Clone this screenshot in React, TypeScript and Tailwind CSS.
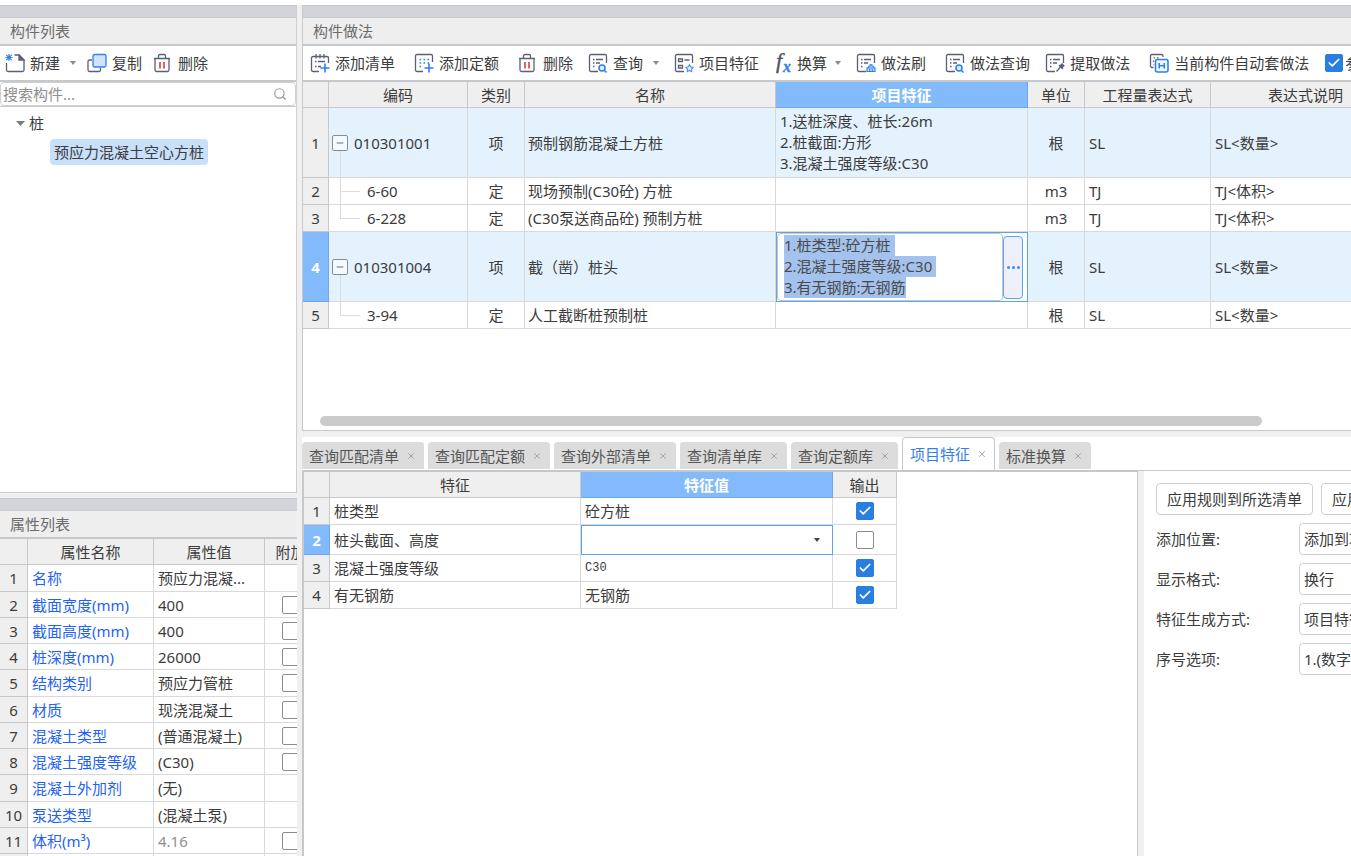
import React, { useEffect, useRef, useState } from "react";
import clsx from "clsx";
import { Check, Minus, Search, X } from "lucide-react";

type IconName =
  | "new"
  | "copy"
  | "trash"
  | "addList"
  | "addQuota"
  | "query"
  | "feature"
  | "fx"
  | "brush"
  | "extract"
  | "auto";

interface ToolItem {
  icon: IconName;
  label: string;
  menu?: boolean;
  wide?: boolean;
}

interface MethodRow {
  code: string;
  kind: string;
  name: string;
  features?: string[];
  unit: string;
  expr: string;
  note: string;
  child?: "mid" | "last";
  editing?: boolean;
}

interface PropertyRow {
  name: string;
  value: string;
  extra?: boolean;
  muted?: boolean;
}

interface FeatureRow {
  name: string;
  value: string;
  output: boolean;
}

const leftTools: ToolItem[] = [
  { icon: "new", label: "新建", menu: true },
  { icon: "copy", label: "复制" },
  { icon: "trash", label: "删除" },
];

const rightTools: ToolItem[] = [
  { icon: "addList", label: "添加清单" },
  { icon: "addQuota", label: "添加定额", wide: true },
  { icon: "trash", label: "删除", wide: true },
  { icon: "query", label: "查询", menu: true },
  { icon: "feature", label: "项目特征" },
  { icon: "fx", label: "换算", menu: true },
  { icon: "brush", label: "做法刷" },
  { icon: "query", label: "做法查询", wide: true },
  { icon: "extract", label: "提取做法" },
  { icon: "auto", label: "当前构件自动套做法", wide: true },
];

const methods: MethodRow[] = [
  {
    code: "010301001",
    kind: "项",
    name: "预制钢筋混凝土方桩",
    features: ["1.送桩深度、桩长:26m", "2.桩截面:方形", "3.混凝土强度等级:C30"],
    unit: "根",
    expr: "SL",
    note: "SL<数量>",
  },
  { code: "6-60", kind: "定", name: "现场预制(C30砼) 方桩", unit: "m3", expr: "TJ", note: "TJ<体积>", child: "mid" },
  { code: "6-228", kind: "定", name: "(C30泵送商品砼) 预制方桩", unit: "m3", expr: "TJ", note: "TJ<体积>", child: "last" },
  {
    code: "010301004",
    kind: "项",
    name: "截（凿）桩头",
    features: ["1.桩类型:砼方桩", "2.混凝土强度等级:C30", "3.有无钢筋:无钢筋"],
    unit: "根",
    expr: "SL",
    note: "SL<数量>",
    editing: true,
  },
  { code: "3-94", kind: "定", name: "人工截断桩预制桩", unit: "根", expr: "SL", note: "SL<数量>", child: "last" },
];

const properties: PropertyRow[] = [
  { name: "名称", value: "预应力混凝..." },
  { name: "截面宽度(mm)", value: "400", extra: true },
  { name: "截面高度(mm)", value: "400", extra: true },
  { name: "桩深度(mm)", value: "26000", extra: true },
  { name: "结构类别", value: "预应力管桩", extra: true },
  { name: "材质", value: "现浇混凝土", extra: true },
  { name: "混凝土类型", value: "(普通混凝土)", extra: true },
  { name: "混凝土强度等级", value: "(C30)", extra: true },
  { name: "混凝土外加剂", value: "(无)" },
  { name: "泵送类型", value: "(混凝土泵)" },
  { name: "体积(m³)", value: "4.16", extra: true, muted: true },
];

const initialFeatures: FeatureRow[] = [
  { name: "桩类型", value: "砼方桩", output: true },
  { name: "桩头截面、高度", value: "", output: false },
  { name: "混凝土强度等级", value: "C30", output: true },
  { name: "有无钢筋", value: "无钢筋", output: true },
];

const tabs = ["查询匹配清单", "查询匹配定额", "查询外部清单", "查询清单库", "查询定额库", "项目特征", "标准换算"];

const options = [
  { id: "position", label: "添加位置:", value: "添加到项" },
  { id: "format", label: "显示格式:", value: "换行" },
  { id: "mode", label: "特征生成方式:", value: "项目特征" },
  { id: "order", label: "序号选项:", value: "1.(数字)" },
];

// shared page outline used by most of the toolbar icons
const sheet = <path d="M9 17.500H2A1.500 1.500 0 0 1 .5 16V2A1.500 1.500 0 0 1 2 .5h14A1.500 1.500 0 0 1 17.500 2v7" />;
const sheetLines = <path d="M4 5.500h1.500M7 5.500h7M4 9h1.500M7 9h4M4 12.500h1.500" />;

const icons: Record<IconName, React.ReactNode> = {
  new: (
    <>
      <path d="M.5 9v7A1.500 1.500 0 0 0 2 17.500h14.500A1.500 1.500 0 0 0 18 16V6l-5-5H8.500" />
      <path d="M13 1v5h5z" fill="#5b6175" />
      <path stroke="#2f80ed" strokeWidth="1.2" d="M-.5 3.500h7M3 0v7M.3.8l5.400 5.400M5.700.8.3 6.200" />
    </>
  ),
  copy: (
    <>
      <path d="M4 6H1.500A1.500 1.500 0 0 0 0 7.500V16a1.500 1.500 0 0 0 1.500 1.500H11a1.500 1.500 0 0 0 1.500-1.500v-2" />
      <rect x="5" y=".5" width="13" height="12.500" rx="1.500" fill="#cfe3fc" stroke="#2f80ed" />
    </>
  ),
  trash: (
    <>
      <path d="M0 4.500h16M4.500 4V2A1.500 1.500 0 0 1 6 .5h4A1.500 1.500 0 0 1 11.500 2v2M1 4.500V16a1.500 1.500 0 0 0 1.500 1.500h11A1.500 1.500 0 0 0 15 16V4.500" />
      <path stroke="#e5373c" strokeWidth="1.6" d="M6 8v6.500M10 8v6.500" />
    </>
  ),
  addList: (
    <>
      <path d="M8 17.500H2A1.500 1.500 0 0 1 .5 16V4A1.500 1.500 0 0 1 2 2.500h14A1.500 1.500 0 0 1 17.500 4v5M5 0v4.500M9 0v4.500M13 0v4.500" />
      <path d="M4 7.500h1.500M7 7.500h7M4 12.500h1.500M7 12.500h3" />
      <path stroke="#2f80ed" strokeWidth="1.6" d="M14 9.500v9M9.500 14h9" />
    </>
  ),
  addQuota: (
    <>
      <path d="M8 17.500H2A1.500 1.500 0 0 1 .5 16V2A1.500 1.500 0 0 1 2 .5h14A1.500 1.500 0 0 1 17.500 2v6" />
      <path stroke="#2f80ed" strokeWidth="1.6" strokeDasharray="1.6 2.4" d="M4.500 5.500h9.600M4.500 9h9.600M4.500 12.500h4" />
      <path stroke="#2f80ed" strokeWidth="1.6" d="M14 9.500v9M9.500 14h9" />
    </>
  ),
  query: (
    <>
      {sheet}
      {sheetLines}
      <circle cx="13" cy="14" r="3" stroke="#2f80ed" fill="#e3effd" strokeWidth="1.6" />
      <path stroke="#2f80ed" strokeWidth="1.6" d="m15.200 16.200 2.300 2.300" />
    </>
  ),
  feature: (
    <>
      {sheet}
      <path d="M3.500 5h4v2.500h-4zM3.500 11.500h4V14h-4zM9.500 6h5" />
      <path
        stroke="#4a92f2"
        strokeWidth="1.2"
        fill="#e8f2fe"
        d="m14.500 10.700 1.200 2.100 2.400.5-1.600 1.800.2 2.400-2.200-1-2.200 1 .2-2.400-1.600-1.800 2.400-.5z"
      />
    </>
  ),
  fx: (
    <>
      <text x="1" y="14" stroke="#4c5266" strokeWidth=".4" fill="#4c5266" className="font-['Liberation_Serif',serif] text-[22px] italic">
        f
      </text>
      <text x="8" y="18" stroke="#2f80ed" strokeWidth=".3" fill="#2f80ed" className="font-['Liberation_Serif',serif] text-base font-bold italic">
        x
      </text>
    </>
  ),
  brush: (
    <>
      {sheet}
      {sheetLines}
      <path
        fill="#cfe3fc"
        stroke="#2f80ed"
        strokeWidth="1.2"
        d="M10 17.500v-3.500h8v3.500zM11 14c0-1.500 1-2 2-2v-1.200h2V12c1 0 2 .5 2 2M12.700 15v2.500M15.300 15v2.500"
      />
    </>
  ),
  extract: (
    <>
      {sheet}
      {sheetLines}
      <path fill="#5b6175" d="m14 12 2-2 1.800 1.800-2 2z" />
      <path d="m14.500 13-4 4.500M13 11l4 4" />
    </>
  ),
  auto: (
    <>
      <path d="M3.500 13.500H2A1.500 1.500 0 0 1 .5 12V2A1.500 1.500 0 0 1 2 .5h9.500A1.500 1.500 0 0 1 13 2v1" />
      <path strokeWidth="1.3" strokeDasharray="1.5 2" d="M3.500 3.800H10M3.500 6.500v4" />
      <rect x="5.500" y="5.500" width="12.500" height="12.500" rx="2" fill="#f1f7ff" stroke="#2f80ed" strokeWidth="1.6" />
      <path stroke="#2f80ed" strokeWidth="1.6" d="M9.200 9v5.500M14.300 9v5.500M9.200 11.700h5" />
    </>
  ),
};

const Icon = ({ name }: { name: IconName }) => (
  <svg width="18" height="18" viewBox="0 0 18 18" fill="none" stroke="#5b6175" strokeWidth="1.3" className="shrink-0 overflow-visible">
    {icons[name]}
  </svg>
);

const Caret = ({ className }: { className?: string }) => (
  <svg width="6" height="4" viewBox="0 0 6 4" className={clsx("shrink-0", className)}>
    <path d="M0 0h6L3 4z" fill="currentColor" />
  </svg>
);

const ToolButton = ({ item }: { item: ToolItem }) => (
  <button
    className={clsx(
      "flex shrink-0 items-center whitespace-nowrap",
      item.icon === "fx" ? "gap-1" : "gap-1.5",
      item.wide && "ml-1"
    )}
  >
    <Icon name={item.icon} />
    <span>{item.label}</span>
    {item.menu && <Caret className="ml-1 text-[#8a8a8a]" />}
  </button>
);

const PanelTitle = ({ children }: { children: React.ReactNode }) => (
  <div className="shrink-0">
    <div className="h-[13px] border-y border-[#c5c8cc] bg-[#d3d4da]" />
    <h2 className="flex h-7 items-center border-b-2 border-[#c5c8cc] bg-[#eeeeee] px-2.5 text-[#6c6c6c]">
      {children}
    </h2>
  </div>
);

const CheckBox = ({
  label,
  checked,
  onChange,
}: {
  label: string;
  checked?: boolean;
  onChange?: () => void;
}) => (
  <span className="relative inline-flex size-[18px] shrink-0 align-middle">
    <input
      type="checkbox"
      aria-label={label}
      checked={onChange ? checked : undefined}
      defaultChecked={onChange ? undefined : checked}
      onChange={onChange}
      className="peer size-[18px] appearance-none rounded-xs border border-[#8c8c8c] bg-white checked:border-[#2a7de1] checked:bg-[#2a7de1]"
    />
    <Check
      size={14}
      strokeWidth={3}
      className="pointer-events-none absolute top-0.5 left-0.5 hidden text-white peer-checked:block"
    />
  </span>
);

const th = "border-r border-b border-[#c8c8c8] bg-[#efefef] p-0 text-center font-normal";
const thActive = "border-r border-b border-[#6aa9f0] bg-[#82bafb] p-0 text-center font-bold text-white";
const td = "border-r border-b border-[#d9d9d9] px-1 py-0 whitespace-nowrap";

const TreeCell = ({ row }: { row: MethodRow }) => {
  if (row.child) {
    return (
      <div className="flex h-[26px] items-center gap-[7px] pl-[11px]">
        <div className="flex h-full w-5 flex-col">
          <div className="flex-1 border-b border-l border-[#dcdcdc]" />
          <div className={clsx("flex-1", row.child === "mid" && "border-l border-[#dcdcdc]")} />
        </div>
        <span>{row.code}</span>
      </div>
    );
  }
  return (
    <div className="flex h-[69px] items-center gap-1.5 pl-[3px]">
      <div className="flex h-full w-4 flex-col items-center">
        <div className="flex-1" />
        <button
          aria-label="折叠"
          className="flex size-4 items-center justify-center rounded-xs border border-[#8c8c8c] bg-white/50 text-[#555]"
        >
          <Minus size={10} />
        </button>
        <div className="flex-1 border-l border-[#d5dde4]" />
      </div>
      <span>{row.code}</span>
    </div>
  );
};

const FeatureEditor = ({ lines }: { lines: string[] }) => {
  const ref = useRef<HTMLTextAreaElement>(null);

  useEffect(() => {
    ref.current?.focus();
    ref.current?.select();
  }, []);

  return (
    <div className="flex h-[69px] items-center border-t border-l border-[#5aa5ee] bg-white pr-1">
      <textarea
        ref={ref}
        aria-label="项目特征"
        defaultValue={lines.join("\n")}
        className="h-full min-w-0 flex-1 resize-none overflow-hidden rounded-sm border border-[#c8c8c8] px-1.5 py-px leading-[21px] text-[#444] outline-none selection:bg-[#a3c2ee] selection:text-[#4a4a4a]"
      />
      <button
        aria-label="更多"
        className="flex h-[63px] w-5 items-center justify-center gap-0.5 rounded-sm border border-[#5aa5ee] bg-[#eeeff8]"
      >
        <span className="size-[3px] rounded-full bg-[#3b8bf0]" />
        <span className="size-[3px] rounded-full bg-[#3b8bf0]" />
        <span className="size-[3px] rounded-full bg-[#3b8bf0]" />
      </button>
    </div>
  );
};

const MethodTable = () => (
  <table className="w-[1098px] table-fixed border-separate border-spacing-0">
    <colgroup>
      <col className="w-[26px]" />
      <col className="w-[139px]" />
      <col className="w-[57px]" />
      <col className="w-[251px]" />
      <col className="w-[252px]" />
      <col className="w-[57px]" />
      <col className="w-[126px]" />
      <col className="w-[190px]" />
    </colgroup>
    <thead>
      <tr className="h-[26px]">
        <th className={th} />
        <th className={th}>编码</th>
        <th className={th}>类别</th>
        <th className={th}>名称</th>
        <th className={thActive}>项目特征</th>
        <th className={th}>单位</th>
        <th className={th}>工程量表达式</th>
        <th className={th}>表达式说明</th>
      </tr>
    </thead>
    <tbody>
      {methods.map((row, i) => (
        <tr key={row.code} className={row.child ? "h-[27px]" : "h-[70px] bg-[#e4f2fe]"}>
          <th className={row.editing ? thActive : th}>{i + 1}</th>
          <td className="border-r border-b border-[#d9d9d9] p-0">
            <TreeCell row={row} />
          </td>
          <td className={clsx(td, "text-center")}>{row.kind}</td>
          <td className={clsx(td, "pl-[3px]")}>{row.name}</td>
          {row.editing ? (
            <td className="border-r border-b border-[#5aa5ee] p-0">
              <FeatureEditor lines={row.features || []} />
            </td>
          ) : (
            <td className={clsx(td, "leading-[21px]")}>
              {row.features?.map((line) => (
                <div key={line}>{line}</div>
              ))}
            </td>
          )}
          <td className={clsx(td, "text-center")}>{row.unit}</td>
          <td className={td}>{row.expr}</td>
          <td className={td}>{row.note}</td>
        </tr>
      ))}
    </tbody>
  </table>
);

const PropertyTable = () => (
  <table className="w-[317px] table-fixed border-separate border-spacing-0">
    <colgroup>
      <col className="w-7" />
      <col className="w-[126px]" />
      <col className="w-[111px]" />
      <col className="w-[52px]" />
    </colgroup>
    <thead>
      <tr className="h-[26px]">
        <th className={th} />
        <th className={th}>属性名称</th>
        <th className={th}>属性值</th>
        <th className={th}>附加</th>
      </tr>
    </thead>
    <tbody>
      {properties.map((row, i) => (
        <tr key={row.name} className="h-[26px] nth-[4n+1]:h-[27px]">
          <th className={th}>{i + 1}</th>
          <td className={clsx(td, "text-[#1f62f5]")}>{row.name}</td>
          <td className={clsx(td, row.muted && "text-[#909090]")}>{row.value}</td>
          <td className={clsx(td, "text-center leading-none")}>
            {row.extra && <CheckBox label={row.name} />}
          </td>
        </tr>
      ))}
      <tr className="h-[26px]">
        <th className={th} />
        <td className={td} />
        <td className={td} />
        <td className={td} />
      </tr>
    </tbody>
  </table>
);

const FeatureTable = () => {
  const [rows, setRows] = useState(initialFeatures);

  const toggle = (index: number) =>
    setRows(rows.map((r, i) => (i === index ? { ...r, output: !r.output } : r)));

  return (
    <table className="w-[593px] table-fixed border-separate border-spacing-0">
      <colgroup>
        <col className="w-[26px]" />
        <col className="w-[251px]" />
        <col className="w-[252px]" />
        <col className="w-16" />
      </colgroup>
      <thead>
        <tr className="h-[26px]">
          <th className={th} />
          <th className={th}>特征</th>
          <th className={thActive}>特征值</th>
          <th className={th}>输出</th>
        </tr>
      </thead>
      <tbody>
        {rows.map((row, i) => (
          <tr key={row.name} className={i === 1 ? "h-[30px]" : "h-[27px]"}>
            <th className={i === 1 ? thActive : th}>{i + 1}</th>
            <td className={td}>{row.name}</td>
            {i === 1 ? (
              <td className="border-r border-b border-[#5aa5ee] p-0">
                <div className="flex h-[29px] items-center border-t border-l border-[#5aa5ee] pr-3">
                  <select aria-label={row.name} className="h-full min-w-0 flex-1 appearance-none px-1 outline-none">
                    <option value="" />
                  </select>
                  <Caret className="text-[#444]" />
                </div>
              </td>
            ) : (
              <td className={clsx(td, row.value === "C30" && "font-['Liberation_Mono',monospace] text-xs")}>
                {row.value}
              </td>
            )}
            <td className={clsx(td, "text-center leading-none")}>
              <CheckBox label={row.name} checked={row.output} onChange={() => toggle(i)} />
            </td>
          </tr>
        ))}
      </tbody>
    </table>
  );
};

const TabBar = () => {
  const [active, setActive] = useState("项目特征");

  return (
    <div className="flex h-[34px] shrink-0 items-end gap-1 border-b border-[#c5c8cc] bg-white">
      {tabs.map((tab) => (
        <div
          key={tab}
          className={clsx(
            "flex shrink-0 items-center gap-[7px] rounded-t",
            tab === active
              ? "h-[33px] border-x border-t border-[#c5c8cc] bg-white px-[7px] text-[#2f80ed]"
              : "mb-px h-[27px] bg-[#dcdcdc] pr-2 pl-[7px] text-[#555]"
          )}
        >
          <button onClick={() => setActive(tab)}>{tab}</button>
          <button aria-label={`关闭${tab}`} className="text-[#999]">
            <X size={10} strokeWidth={2} />
          </button>
        </div>
      ))}
    </div>
  );
};

const OptionsPanel = () => (
  <div className="w-[207px] shrink-0 overflow-hidden bg-white pt-3 pl-3">
    <div className="flex gap-2">
      <button className="h-8 w-[157px] shrink-0 rounded border border-[#cfcfcf] whitespace-nowrap">
        应用规则到所选清单
      </button>
      <button className="h-8 w-[157px] shrink-0 rounded border border-[#cfcfcf] px-2.5 text-left whitespace-nowrap">
        应用规则到全部清单
      </button>
    </div>
    <div className="mt-2 flex flex-col gap-2">
      {options.map((opt) => (
        <div key={opt.id} className="flex h-8 items-center">
          <label htmlFor={opt.id} className="w-[143px] shrink-0">
            {opt.label}
          </label>
          <select
            id={opt.id}
            className="h-full w-[150px] shrink-0 appearance-none rounded border border-[#cfcfcf] bg-white px-1"
          >
            <option>{opt.value}</option>
          </select>
        </div>
      ))}
    </div>
  </div>
);

const ComponentPanel = () => (
  <section className="flex h-[488px] shrink-0 flex-col border-r border-b border-[#cfcfcf] bg-white">
    <PanelTitle>构件列表</PanelTitle>
    <div className="flex h-9 shrink-0 items-center gap-3 border-b-2 border-[#c5c8cc] pl-1.5">
      {leftTools.map((item) => (
        <ToolButton key={item.label} item={item} />
      ))}
    </div>
    <label className="flex h-6 shrink-0 items-center rounded border border-[#d0d0d0] pr-2">
      <input
        placeholder="搜索构件..."
        className="min-w-0 flex-1 px-0.5 outline-none placeholder:text-[#8e8e8e]"
      />
      <Search size={14} className="text-[#999]" />
    </label>
    <ul className="flex-1 border-t border-[#c5c8cc] pt-1 pl-4">
      <li>
        <div className="flex h-6 items-center gap-1">
          <svg width="9" height="5" viewBox="0 0 9 5">
            <path d="M0 0h9L4.500 5z" fill="#7d7d7d" />
          </svg>
          <span>桩</span>
        </div>
        <ul className="pt-1 pl-[34px]">
          <li className="flex h-[26px] w-fit items-center rounded bg-[#c9e0fb] px-1">预应力混凝土空心方桩</li>
        </ul>
      </li>
    </ul>
  </section>
);

export default function App() {
  return (
    <div className="flex h-screen flex-col overflow-hidden bg-[#f0f0f0] font-['Noto_Sans','Noto_Sans_CJK_SC',sans-serif] text-[15px] leading-5 text-[#3c3c3c]">
      <div className="h-[5px] shrink-0 bg-white" />
      <div className="flex min-h-0 flex-1 gap-[5px]">
        <aside className="flex w-[297px] shrink-0 flex-col gap-[5px] overflow-hidden">
          <ComponentPanel />
          <section className="min-h-0 flex-1 overflow-hidden bg-white">
            <PanelTitle>属性列表</PanelTitle>
            <PropertyTable />
          </section>
        </aside>

        <main className="flex min-w-0 flex-1 flex-col gap-1.5">
          <section className="flex h-[426px] shrink-0 flex-col overflow-hidden border-b border-l border-[#c5c8cc] bg-white">
            <PanelTitle>构件做法</PanelTitle>
            <div className="flex h-9 shrink-0 items-center gap-4 overflow-hidden border-b-2 border-[#c5c8cc] pl-2">
              {rightTools.map((item) => (
                <ToolButton key={item.label} item={item} />
              ))}
              <label className="flex shrink-0 items-center gap-0.5">
                <CheckBox label="参数" checked />
                <span>参</span>
              </label>
            </div>
            <div className="min-h-0 flex-1 overflow-hidden">
              <MethodTable />
            </div>
            <div className="mr-[89px] mb-1 ml-[17px] h-2.5 shrink-0 rounded-full bg-[#cbcbcb]" />
          </section>

          <section className="flex min-h-0 flex-1 flex-col">
            <TabBar />
            <div className="flex min-h-0 flex-1 gap-1.5">
              <div className="min-w-0 flex-1 overflow-hidden border-t border-r border-l-2 border-[#c5c8cc] bg-white">
                <FeatureTable />
              </div>
              <OptionsPanel />
            </div>
          </section>
        </main>
      </div>
    </div>
  );
}
